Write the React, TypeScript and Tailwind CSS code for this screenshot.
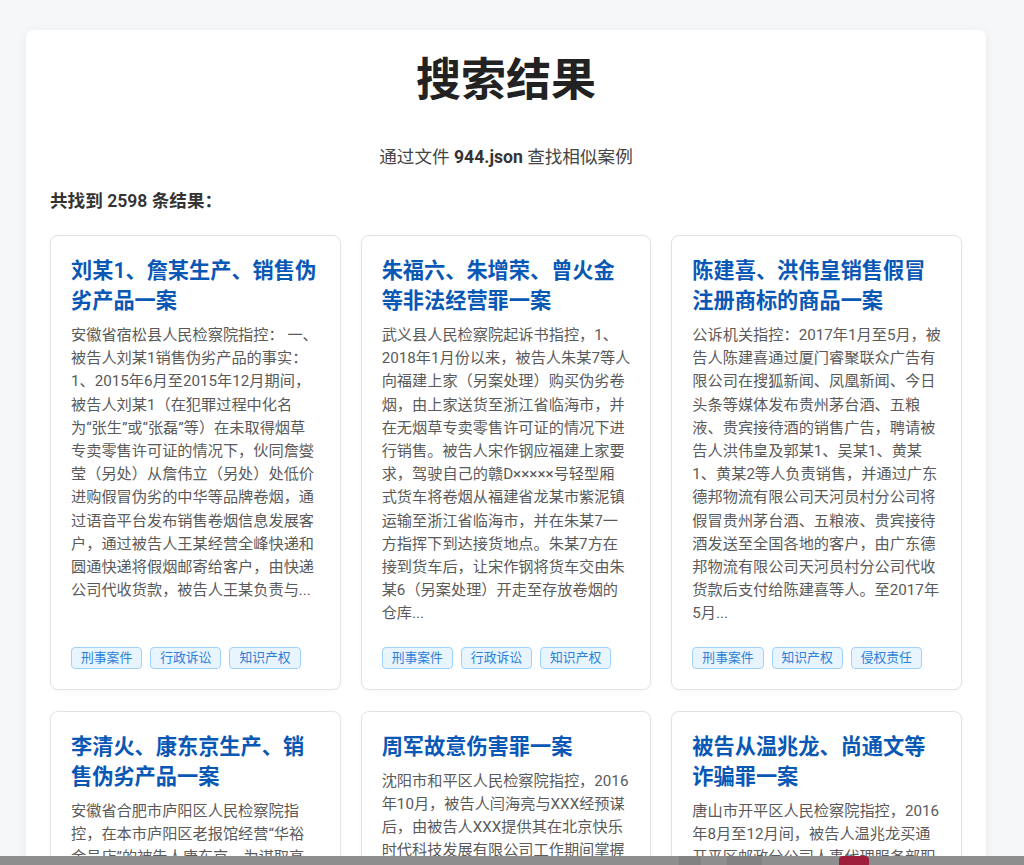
import React from 'react';

type CaseItem = {
  title: string;
  lines: string[];
  tags: string[];
};

const cases: CaseItem[] = [
  {
    title: '刘某1、詹某生产、销售伪劣产品一案',
    lines: [
      '安徽省宿松县人民检察院指控： 一、',
      '被告人刘某1销售伪劣产品的事实：',
      '1、2015年6月至2015年12月期间，',
      '被告人刘某1（在犯罪过程中化名',
      '为“张生”或“张磊”等）在未取得烟草',
      '专卖零售许可证的情况下，伙同詹燮',
      '莹（另处）从詹伟立（另处）处低价',
      '进购假冒伪劣的中华等品牌卷烟，通',
      '过语音平台发布销售卷烟信息发展客',
      '户，通过被告人王某经营全峰快递和',
      '圆通快递将假烟邮寄给客户，由快递',
      '公司代收货款，被告人王某负责与...',
    ],
    tags: ['刑事案件', '行政诉讼', '知识产权'],
  },
  {
    title: '朱福六、朱增荣、曾火金等非法经营罪一案',
    lines: [
      '武义县人民检察院起诉书指控，1、',
      '2018年1月份以来，被告人朱某7等人',
      '向福建上家（另案处理）购买伪劣卷',
      '烟，由上家送货至浙江省临海市，并',
      '在无烟草专卖零售许可证的情况下进',
      '行销售。被告人宋作钢应福建上家要',
      '求，驾驶自己的赣D×××××号轻型厢',
      '式货车将卷烟从福建省龙某市紫泥镇',
      '运输至浙江省临海市，并在朱某7一',
      '方指挥下到达接货地点。朱某7方在',
      '接到货车后，让宋作钢将货车交由朱',
      '某6（另案处理）开走至存放卷烟的',
      '仓库...',
    ],
    tags: ['刑事案件', '行政诉讼', '知识产权'],
  },
  {
    title: '陈建喜、洪伟皇销售假冒注册商标的商品一案',
    lines: [
      '公诉机关指控：2017年1月至5月，被',
      '告人陈建喜通过厦门睿聚联众广告有',
      '限公司在搜狐新闻、凤凰新闻、今日',
      '头条等媒体发布贵州茅台酒、五粮',
      '液、贵宾接待酒的销售广告，聘请被',
      '告人洪伟皇及郭某1、吴某1、黄某',
      '1、黄某2等人负责销售，并通过广东',
      '德邦物流有限公司天河员村分公司将',
      '假冒贵州茅台酒、五粮液、贵宾接待',
      '酒发送至全国各地的客户，由广东德',
      '邦物流有限公司天河员村分公司代收',
      '货款后支付给陈建喜等人。至2017年',
      '5月...',
    ],
    tags: ['刑事案件', '知识产权', '侵权责任'],
  },
  {
    title: '李清火、康东京生产、销售伪劣产品一案',
    lines: [
      '安徽省合肥市庐阳区人民检察院指',
      '控，在本市庐阳区老报馆经营“华裕',
      '金号店”的被告人康东京，为谋取高',
      '额利润，明知系伪劣产品仍予销售...',
    ],
    tags: ['刑事案件'],
  },
  {
    title: '周军故意伤害罪一案',
    lines: [
      '沈阳市和平区人民检察院指控，2016',
      '年10月，被告人闫海亮与XXX经预谋',
      '后，由被告人XXX提供其在北京快乐',
      '时代科技发展有限公司工作期间掌握',
      '的客户信息...',
    ],
    tags: ['刑事案件'],
  },
  {
    title: '被告从温兆龙、尚通文等诈骗罪一案',
    lines: [
      '唐山市开平区人民检察院指控，2016',
      '年8月至12月间，被告人温兆龙买通',
      '开平区邮政分公司人事代理服务部职',
      '员...',
    ],
    tags: ['刑事案件'],
  },
];

function CaseCard({ item }: { item: CaseItem }) {
  return (
    <div className="flex flex-col rounded-lg border border-[#e3e3e3] bg-white p-5 shadow-[0_1px_4px_rgba(0,0,0,0.04)]">
      <h3 className="text-[21.2px] leading-[30px] font-semibold text-[#0a58b5]">{item.title}</h3>
      <div className="mt-[8px] flex-1 text-[15.2px] leading-[23.2px] text-[#5a5a5a]">
        {item.lines.map((line, i) => (
          <div key={i} className="whitespace-nowrap">
            {line}
          </div>
        ))}
      </div>
      <div className="mt-[21px] flex gap-2">
        {item.tags.map((tag) => (
          <span
            key={tag}
            className="flex h-[22px] items-center rounded border border-[#9fd2fb] bg-[#e8f5ff] px-[9px] text-[12.8px] text-[#2b7fd8]"
          >
            {tag}
          </span>
        ))}
      </div>
    </div>
  );
}

export default function App() {
  return (
    <div className="min-h-screen bg-[#f6f7f9] pt-[30px] pl-[26px] pb-10 font-[Roboto,'Noto_Sans_CJK_SC',sans-serif]">
      <div className="w-[960px] rounded-lg bg-white px-6 pt-6 pb-6 shadow-[0_2px_12px_rgba(0,0,0,0.06)]">
        <h1 className="text-center text-[45px] leading-[54px] font-bold text-[#222]">搜索结果</h1>
        <p className="mt-9 text-center text-[17.6px] leading-[26px] text-[#444]">
          通过文件 <strong className="font-bold text-[#333]">944.json</strong> 查找相似案例
        </p>
        <p className="mt-[18px] text-[17.6px] leading-[26px] font-semibold text-[#333]">共找到 2598 条结果：</p>
        <div className="mt-[21px] grid grid-cols-3 gap-x-5 gap-y-[21px]">
          {cases.map((c) => (
            <CaseCard key={c.title} item={c} />
          ))}
        </div>
      </div>

      {/* bottom overlay bar */}
      <div className="fixed right-0 bottom-0 left-0 flex h-[9px] items-end bg-[#8e8e8e]">
        <div className="w-[679px]" />
        <div className="h-[9px] w-[22px] bg-[#828282]" />
        <div className="w-[26px]" />
        <div className="h-[9px] w-[35px] bg-[#828282]" />
        <div className="w-[77px]" />
        <div className="h-[9px] w-[30px] rounded-t-sm bg-[#9e1f3c]" />
      </div>
    </div>
  );
}
